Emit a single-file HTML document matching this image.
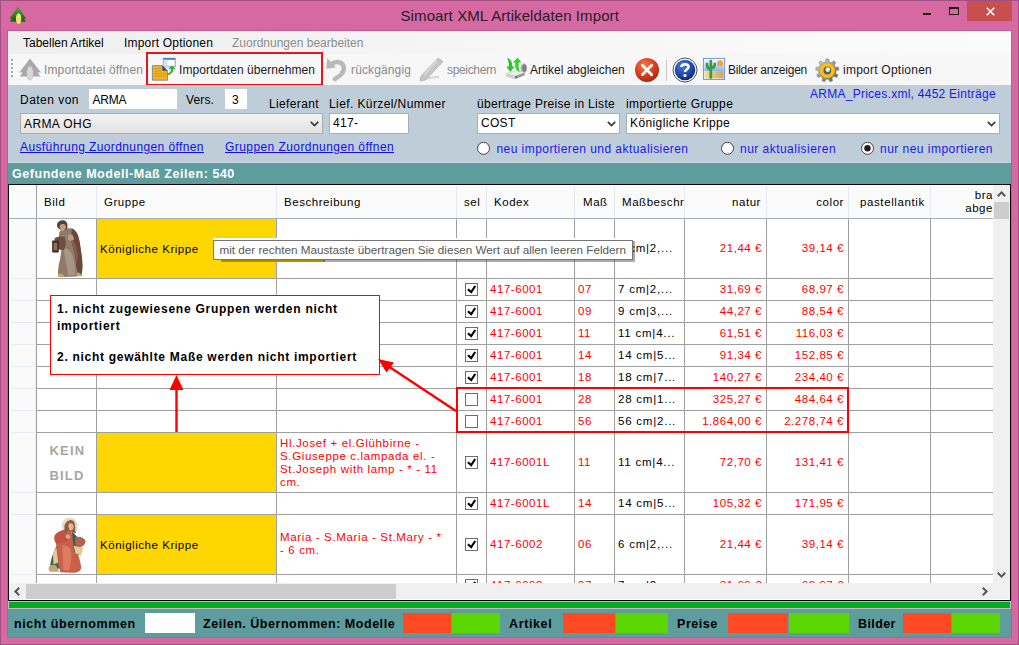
<!DOCTYPE html>
<html><head><meta charset="utf-8">
<style>
*{box-sizing:border-box}
html,body{margin:0;padding:0}
body{width:1019px;height:645px;position:relative;overflow:hidden;background:#D669A1;font-family:"Liberation Sans",sans-serif}
.a{position:absolute}
.t{position:absolute;white-space:nowrap;line-height:1}
svg{position:absolute}
</style></head><body>
<div class="a" style="left:0px;top:0px;width:1019px;height:645px;border:1px solid #A35080;"></div>
<svg style="left:6px;top:2px" width="24" height="24" viewBox="0 0 24 24">
<defs><linearGradient id="tg" x1="0" y1="0" x2="0" y2="1"><stop offset="0" stop-color="#3cb82a"/><stop offset="1" stop-color="#0b5a0c"/></linearGradient></defs>
<path d="M11.9 5.6 L19.9 16.4 L17.6 16.4 L19.7 19.6 L4.1 19.6 L6.2 16.4 L3.9 16.4 Z" fill="url(#tg)" stroke="#6a5a20" stroke-width="0.5"/>
<ellipse cx="12.6" cy="16.8" rx="2.7" ry="5.3" fill="#ece070"/>
<ellipse cx="12.6" cy="13.5" rx="1.8" ry="2" fill="#f6ee90"/>
</svg>
<div class="t" style="left:400.5px;top:7.80px;font-size:15px;color:#2b1b28;letter-spacing:0.1px;">Simoart XML Artikeldaten Import</div>
<div class="a" style="left:923px;top:13px;width:8px;height:2px;background:#1a1a1a;"></div>
<div class="a" style="left:949px;top:7px;width:10px;height:8px;border:1px solid #1a1a1a;border-top-width:2px;"></div>
<div class="a" style="left:967px;top:1px;width:45px;height:20px;background:#C7504F;"></div>
<svg style="left:985.5px;top:7px" width="9" height="9" viewBox="0 0 9 9"><path d="M0.8 0.8 L8.2 8.2 M8.2 0.8 L0.8 8.2" stroke="#fff" stroke-width="1.6"/></svg>
<div class="a" style="left:7px;top:30px;width:1005px;height:608px;border:1px solid #C55A92;"></div>
<div class="a" style="left:8px;top:31px;width:1003px;height:23px;background:linear-gradient(90deg,#EEEEEE,#F6F6F6 50%,#FBFBFB);"></div>
<div class="t" style="left:23px;top:36.84px;font-size:12px;color:#000;">Tabellen Artikel</div>
<div class="t" style="left:124px;top:36.84px;font-size:12px;color:#000;letter-spacing:0.2px;">Import Optionen</div>
<div class="t" style="left:232px;top:36.84px;font-size:12px;color:#8d8d8d;">Zuordnungen bearbeiten</div>
<div class="a" style="left:8px;top:54px;width:1003px;height:31px;background:#F7F7F7;"></div>
<div class="a" style="left:11px;top:59px;width:2px;height:2px;background:#A8A8A8;"></div>
<div class="a" style="left:11px;top:63px;width:2px;height:2px;background:#A8A8A8;"></div>
<div class="a" style="left:11px;top:67px;width:2px;height:2px;background:#A8A8A8;"></div>
<div class="a" style="left:11px;top:71px;width:2px;height:2px;background:#A8A8A8;"></div>
<div class="a" style="left:11px;top:75px;width:2px;height:2px;background:#A8A8A8;"></div>
<svg style="left:19px;top:58px" width="23" height="23" viewBox="0 0 23 23">
<path d="M11 0.5 L22 14.5 L18.5 14.5 L21.5 18.5 L0.8 18.5 L3.8 14.5 L0.3 14.5 Z" fill="#A9A9A9"/>
<ellipse cx="11" cy="15" rx="3.3" ry="7" fill="#D9D9D9" stroke="#B5B5B5" stroke-width="0.6"/>
</svg>
<div class="t" style="left:44px;top:63.84px;font-size:12px;color:#8a8a8a;letter-spacing:0.14px;">Importdatei öffnen</div>
<div class="a" style="left:146px;top:52px;width:177px;height:34px;border:2px solid #E8151B;"></div>
<svg style="left:148px;top:54px" width="32" height="30" viewBox="0 0 32 30">
<rect x="15.2" y="4.2" width="12" height="8.6" fill="#fff" stroke="#7c8fb0" stroke-width="0.8"/>
<rect x="15.2" y="4.2" width="12" height="1.6" fill="#4a72c4"/>
<rect x="15.6" y="5.8" width="3.8" height="6.6" fill="#cfe2f8"/>
<path d="M4.4 11.6 L14.4 11.6 L19.5 16.8 L19.5 26.2 L4.4 26.2 Z" fill="#F4B21E" stroke="#7a7a90" stroke-width="0.8"/>
<path d="M14.4 11.6 L14.4 16.8 L19.5 16.8 Z" fill="#3a4a7a"/>
<path d="M6.5 14.5 H13 M6.5 17 H13 M6.5 19.5 H18 M6.5 22 H18" stroke="#C89A3A" stroke-width="1.1"/>
<path d="M19.8 19.8 C22.5 19 23.6 17 23.4 14.8 L21 14.8 L24 11.8 L27.2 14.8 L25 14.8 C25.2 18 23 20.5 19.8 20.8 Z" fill="#2ec02a" stroke="#1a8a1a" stroke-width="0.5"/>
</svg>
<div class="t" style="left:179px;top:63.84px;font-size:12px;color:#1a1a1a;letter-spacing:0.06px;">Importdaten übernehmen</div>
<svg style="left:322px;top:54px" width="28" height="30" viewBox="0 0 28 30">
<path d="M5.3 4 L4.2 14.7 L14 13.5 Z" fill="#B9B9B9"/>
<path d="M9 10.5 C13.5 6.5 21.5 7 21.8 14.2 C22 19 17.5 22.5 12.8 25" stroke="#B9B9B9" stroke-width="4.6" fill="none" stroke-linecap="round"/>
</svg>
<div class="t" style="left:351px;top:63.84px;font-size:12px;color:#8a8a8a;letter-spacing:0.13px;">rückgängig</div>
<svg style="left:416px;top:54px" width="30" height="30" viewBox="0 0 30 30">
<path d="M5 25 L22.3 23" stroke="#DADADA" stroke-width="2.4" stroke-linecap="round"/>
<path d="M22.3 4 L27 7.6 L9.5 26 L4 27 L5 22 Z" fill="#C6C6C6" stroke="#B0B0B0" stroke-width="0.7"/>
<path d="M21 7 L8 21" stroke="#DCDCDC" stroke-width="1.2"/>
</svg>
<div class="t" style="left:447px;top:63.84px;font-size:12px;color:#8a8a8a;letter-spacing:-0.34px;">speichern</div>
<svg style="left:502px;top:54px" width="30" height="30" viewBox="0 0 30 30">
<rect x="3" y="4" width="22" height="22" fill="#FDFDFD"/>
<ellipse cx="21.8" cy="14.2" rx="3.4" ry="5" fill="#B4B4B4"/>
<ellipse cx="22.3" cy="14.2" rx="2" ry="3.6" fill="#7E7E7E"/>
<path d="M4 19.5 L16 16.2 L22.5 18.8 L22.5 21.2 L13 25 L4 22.2 Z" fill="#A8A8A8"/>
<path d="M4 19.5 L16 16.2 L22.5 18.8 L13 22.2 Z" fill="#EDEDED" stroke="#C8C8C8" stroke-width="0.4"/>
<path d="M4 19.5 L13 22.2 L13 25 L4 22.2 Z" fill="#D0D0D0"/>
<path d="M13 22.2 L22.5 18.8 L22.5 21.2 L13 25 Z" fill="#9A9A9A"/>
<rect x="13.6" y="22" width="1" height="2.2" fill="#2a6a2a"/>
<path d="M4.8 4 C8.2 4.6 10.6 7.5 10.3 12.6 L12.6 12.6 L8.3 18 L4.2 12.4 L6.8 12.5 C7 9.5 6.5 6.5 4.8 4 Z" fill="#2FC42A"/>
<path d="M17.8 18 C14 17 12.6 13 13.2 8.6 L10.6 8.6 L15.6 3.6 L19.6 8.4 L16.9 8.5 C16.4 11.8 16.8 15.2 17.8 18 Z" fill="#3CD034"/>
</svg>
<div class="t" style="left:530px;top:63.84px;font-size:12px;color:#1a1a1a;">Artikel abgleichen</div>
<svg style="left:634px;top:57px" width="26" height="26" viewBox="0 0 26 26">
<defs><radialGradient id="rg1" cx="40%" cy="30%" r="70%"><stop offset="0" stop-color="#f07a4a"/><stop offset="0.6" stop-color="#d9401c"/><stop offset="1" stop-color="#a82a10"/></radialGradient></defs>
<circle cx="13" cy="13" r="12" fill="url(#rg1)"/>
<path d="M8.3 8.3 L17.7 17.7 M17.7 8.3 L8.3 17.7" stroke="#fff" stroke-width="2.7" stroke-linecap="round"/>
</svg>
<div class="a" style="left:666px;top:60px;width:1px;height:21px;background:#c8c8c8;"></div>
<svg style="left:672px;top:57px" width="26" height="26" viewBox="0 0 26 26">
<defs><radialGradient id="rg2" cx="40%" cy="30%" r="70%"><stop offset="0" stop-color="#4a7ee0"/><stop offset="0.7" stop-color="#1c44a8"/><stop offset="1" stop-color="#102a78"/></radialGradient></defs>
<circle cx="13" cy="13" r="12" fill="#fff" stroke="#555" stroke-width="1"/>
<circle cx="13" cy="13" r="10.3" fill="url(#rg2)"/>
<path d="M9.5 10 C9.5 6.5 16.5 6.5 16.5 10 C16.5 12.5 13 12.5 13 15" stroke="#fff" stroke-width="2.6" fill="none"/>
<circle cx="13" cy="18.5" r="1.6" fill="#fff"/>
</svg>
<svg style="left:700px;top:54px" width="30" height="30" viewBox="0 0 30 30">
<defs><linearGradient id="sky" x1="0" y1="0" x2="0" y2="1"><stop offset="0" stop-color="#F4F8FE"/><stop offset="1" stop-color="#86B4EE"/></linearGradient>
<linearGradient id="sand" x1="0" y1="0" x2="1" y2="0"><stop offset="0" stop-color="#F2E2A0"/><stop offset="1" stop-color="#C8A660"/></linearGradient></defs>
<rect x="3.4" y="4.4" width="21.2" height="21" fill="#fff" stroke="#6A8AD8" stroke-width="0.9"/>
<rect x="4.3" y="5.3" width="19.4" height="11.8" fill="url(#sky)"/>
<rect x="4.3" y="17.1" width="19.4" height="7.4" fill="url(#sand)"/>
<circle cx="20.2" cy="9.2" r="3" fill="#F5A623"/>
<path d="M10.8 23.6 L10.8 7 M10.8 15 C7.5 15 7 13 7 10 M10.8 14 C14 14 14.8 12.5 14.8 10" stroke="#3E9A3A" stroke-width="2.7" fill="none" stroke-linecap="round"/>
</svg>
<div class="t" style="left:728px;top:63.84px;font-size:12px;color:#1a1a1a;letter-spacing:-0.25px;">Bilder anzeigen</div>
<svg style="left:812px;top:54px" width="32" height="30" viewBox="0 0 32 30">
<defs><linearGradient id="gg" x1="0" y1="0" x2="1" y2="1"><stop offset="0" stop-color="#DADADA"/><stop offset="1" stop-color="#4E565C"/></linearGradient></defs>
<polygon points="13.55,7.88 13.91,4.98 16.69,4.98 17.05,7.88 19.44,8.74 19.50,8.77 21.64,6.79 23.77,8.57 22.18,11.02 23.46,13.21 23.49,13.28 26.40,13.13 26.88,15.87 24.10,16.72 23.67,19.23 23.64,19.30 25.97,21.06 24.58,23.46 21.89,22.33 19.95,23.97 19.89,24.01 20.54,26.85 17.93,27.80 16.61,25.20 14.06,25.21 13.99,25.20 12.67,27.80 10.06,26.85 10.71,24.01 8.75,22.38 8.71,22.33 6.02,23.46 4.63,21.06 6.96,19.30 6.50,16.80 6.50,16.72 3.72,15.87 4.20,13.13 7.11,13.28 8.37,11.07 8.42,11.02 6.83,8.57 8.96,6.79 11.10,8.77 13.48,7.89" fill="url(#gg)" stroke="#707070" stroke-width="0.5"/>
<circle cx="15.3" cy="16.5" r="7.6" fill="#FFC20E" stroke="#E8A000" stroke-width="0.6"/>
<circle cx="15.3" cy="16.5" r="3.9" fill="#5A5E62"/>
<circle cx="15.8" cy="15.6" r="2.3" fill="#F4F4F4"/>
</svg>
<div class="t" style="left:843px;top:63.84px;font-size:12px;color:#1a1a1a;letter-spacing:0.24px;">import Optionen</div>
<div class="a" style="left:8px;top:85px;width:1003px;height:78px;background:#BFCDD9;"></div>
<div class="a" style="left:8px;top:162px;width:1003px;height:1px;background:#C8D3DF;"></div>
<div class="t" style="left:20px;top:93.84px;font-size:12px;color:#000;letter-spacing:0.48px;">Daten von</div>
<div class="a" style="left:89px;top:89px;width:88px;height:20px;background:#fff;"></div>
<div class="t" style="left:92.5px;top:93.84px;font-size:12px;color:#000;letter-spacing:-0.2px;">ARMA</div>
<div class="t" style="left:186px;top:93.84px;font-size:12px;color:#000;letter-spacing:0.13px;">Vers.</div>
<div class="a" style="left:225px;top:89px;width:22px;height:20px;background:#fff;"></div>
<div class="t" style="left:232px;top:93.84px;font-size:12px;color:#000;">3</div>
<div class="t" style="left:269px;top:98.14px;font-size:12px;color:#000;letter-spacing:0.37px;">Lieferant</div>
<div class="t" style="left:329px;top:98.14px;font-size:12px;color:#000;letter-spacing:0.4px;">Lief. Kürzel/Nummer</div>
<div class="t" style="left:477px;top:97.84px;font-size:12px;color:#000;letter-spacing:0.32px;">übertrage Preise in Liste</div>
<div class="t" style="left:626px;top:97.84px;font-size:12px;color:#000;letter-spacing:0.4px;">importierte Gruppe</div>
<div class="t" style="left:810px;top:88.04px;font-size:12px;color:#1a1ae6;letter-spacing:0.26px;">ARMA_Prices.xml, 4452 Einträge</div>
<div class="a" style="left:20px;top:113px;width:303px;height:21px;background:linear-gradient(#F2F2F2,#E3E3E3);border:1px solid #ADADAD;"></div>
<div class="t" style="left:24px;top:117.84px;font-size:12px;color:#000;letter-spacing:0.4px;">ARMA OHG</div>
<svg style="left:310px;top:121px" width="9" height="6" viewBox="0 0 9 6"><path d="M0.8 0.8 L4.5 4.6 L8.2 0.8" stroke="#3a3a3a" stroke-width="1.7" fill="none"/></svg>
<div class="a" style="left:329px;top:113px;width:80px;height:21px;background:#fff;border:1px solid #ABADB3;"></div>
<div class="t" style="left:333px;top:117.34px;font-size:12px;color:#000;letter-spacing:0.3px;">417-</div>
<div class="a" style="left:477px;top:113px;width:143px;height:21px;background:#fff;border:1px solid #ABADB3;"></div>
<div class="t" style="left:481px;top:117.34px;font-size:12px;color:#000;letter-spacing:0.3px;">COST</div>
<svg style="left:607px;top:121px" width="9" height="6" viewBox="0 0 9 6"><path d="M0.8 0.8 L4.5 4.6 L8.2 0.8" stroke="#3a3a3a" stroke-width="1.7" fill="none"/></svg>
<div class="a" style="left:626px;top:113px;width:374px;height:21px;background:#fff;border:1px solid #ABADB3;"></div>
<div class="t" style="left:630px;top:117.34px;font-size:12px;color:#000;letter-spacing:0.4px;">Königliche Krippe</div>
<svg style="left:987px;top:121px" width="9" height="6" viewBox="0 0 9 6"><path d="M0.8 0.8 L4.5 4.6 L8.2 0.8" stroke="#3a3a3a" stroke-width="1.7" fill="none"/></svg>
<div class="t" style="left:20px;top:140.84px;font-size:12px;color:#1010E6;letter-spacing:0.39px;text-decoration:underline;">Ausführung Zuordnungen öffnen</div>
<div class="t" style="left:225px;top:140.84px;font-size:12px;color:#1010E6;letter-spacing:0.43px;text-decoration:underline;">Gruppen Zuordnungen öffnen</div>
<svg style="left:477px;top:142px" width="14" height="14" viewBox="0 0 14 14"><circle cx="6.5" cy="6.3" r="6" fill="#fff" stroke="#444" stroke-width="1"/></svg>
<div class="t" style="left:496.5px;top:143.04px;font-size:12px;color:#1a1ae6;letter-spacing:0.44px;">neu importieren und aktualisieren</div>
<svg style="left:721px;top:142px" width="14" height="14" viewBox="0 0 14 14"><circle cx="6.5" cy="6.3" r="6" fill="#fff" stroke="#444" stroke-width="1"/></svg>
<div class="t" style="left:740px;top:143.04px;font-size:12px;color:#1a1ae6;letter-spacing:0.47px;">nur aktualisieren</div>
<svg style="left:861px;top:142px" width="14" height="14" viewBox="0 0 14 14"><circle cx="6.5" cy="6.3" r="6" fill="#fff" stroke="#444" stroke-width="1"/><circle cx="6.5" cy="6.3" r="3.2" fill="#1e1e1e"/></svg>
<div class="t" style="left:880px;top:143.04px;font-size:12px;color:#1a1ae6;letter-spacing:0.47px;">nur neu importieren</div>
<div class="a" style="left:8px;top:163px;width:1003px;height:21px;background:#5F9C9E;"></div>
<div class="t" style="left:12px;top:167.82px;font-size:12.5px;color:#fff;font-weight:700;letter-spacing:0.54px;">Gefundene Modell-Maß Zeilen: 540</div>
<div class="a" style="left:8px;top:184px;width:1003px;height:417px;background:#fff;border:1px solid #000;"></div>
<div class="a" style="left:9px;top:185px;width:984px;height:33px;background:#FBFBFB;"></div>
<div class="a" style="left:9px;top:218px;width:984px;height:1px;background:#A7AEB8;"></div>
<div class="a" style="left:36px;top:185px;width:1px;height:33px;background:#A0A0A0;"></div>
<div class="a" style="left:96px;top:185px;width:1px;height:33px;background:#E3EAF4;"></div>
<div class="a" style="left:276px;top:185px;width:1px;height:33px;background:#E3EAF4;"></div>
<div class="a" style="left:456px;top:185px;width:1px;height:33px;background:#E3EAF4;"></div>
<div class="a" style="left:486px;top:185px;width:1px;height:33px;background:#E3EAF4;"></div>
<div class="a" style="left:574px;top:185px;width:1px;height:33px;background:#E3EAF4;"></div>
<div class="a" style="left:614px;top:185px;width:1px;height:33px;background:#E3EAF4;"></div>
<div class="a" style="left:684px;top:185px;width:1px;height:33px;background:#E3EAF4;"></div>
<div class="a" style="left:766px;top:185px;width:1px;height:33px;background:#E3EAF4;"></div>
<div class="a" style="left:848px;top:185px;width:1px;height:33px;background:#E3EAF4;"></div>
<div class="a" style="left:930px;top:185px;width:1px;height:33px;background:#E3EAF4;"></div>
<div class="a" style="left:9px;top:219px;width:27px;height:364px;background:#FAFAFA;"></div>
<div class="a" style="left:35px;top:219px;width:1px;height:364px;background:#E6EEF8;"></div>
<div class="a" style="left:11px;top:278px;width:24px;height:1px;background:#E3ECF8;"></div>
<div class="a" style="left:11px;top:300px;width:24px;height:1px;background:#E3ECF8;"></div>
<div class="a" style="left:11px;top:322px;width:24px;height:1px;background:#E3ECF8;"></div>
<div class="a" style="left:11px;top:344px;width:24px;height:1px;background:#E3ECF8;"></div>
<div class="a" style="left:11px;top:366px;width:24px;height:1px;background:#E3ECF8;"></div>
<div class="a" style="left:11px;top:388px;width:24px;height:1px;background:#E3ECF8;"></div>
<div class="a" style="left:11px;top:410px;width:24px;height:1px;background:#E3ECF8;"></div>
<div class="a" style="left:11px;top:432px;width:24px;height:1px;background:#E3ECF8;"></div>
<div class="a" style="left:11px;top:492px;width:24px;height:1px;background:#E3ECF8;"></div>
<div class="a" style="left:11px;top:514px;width:24px;height:1px;background:#E3ECF8;"></div>
<div class="a" style="left:11px;top:574px;width:24px;height:1px;background:#E3ECF8;"></div>
<div class="a" style="left:36px;top:219px;width:1px;height:364px;background:#A0A0A0;"></div>
<div class="a" style="left:96px;top:219px;width:1px;height:364px;background:#A0A0A0;"></div>
<div class="a" style="left:276px;top:219px;width:1px;height:364px;background:#A0A0A0;"></div>
<div class="a" style="left:456px;top:219px;width:1px;height:364px;background:#A0A0A0;"></div>
<div class="a" style="left:486px;top:219px;width:1px;height:364px;background:#A0A0A0;"></div>
<div class="a" style="left:574px;top:219px;width:1px;height:364px;background:#A0A0A0;"></div>
<div class="a" style="left:614px;top:219px;width:1px;height:364px;background:#A0A0A0;"></div>
<div class="a" style="left:684px;top:219px;width:1px;height:364px;background:#A0A0A0;"></div>
<div class="a" style="left:766px;top:219px;width:1px;height:364px;background:#A0A0A0;"></div>
<div class="a" style="left:848px;top:219px;width:1px;height:364px;background:#A0A0A0;"></div>
<div class="a" style="left:930px;top:219px;width:1px;height:364px;background:#A0A0A0;"></div>
<div class="a" style="left:37px;top:278px;width:956px;height:1px;background:#A0A0A0;"></div>
<div class="a" style="left:37px;top:300px;width:956px;height:1px;background:#A0A0A0;"></div>
<div class="a" style="left:37px;top:322px;width:956px;height:1px;background:#A0A0A0;"></div>
<div class="a" style="left:37px;top:344px;width:956px;height:1px;background:#A0A0A0;"></div>
<div class="a" style="left:37px;top:366px;width:956px;height:1px;background:#A0A0A0;"></div>
<div class="a" style="left:37px;top:388px;width:956px;height:1px;background:#A0A0A0;"></div>
<div class="a" style="left:37px;top:410px;width:956px;height:1px;background:#A0A0A0;"></div>
<div class="a" style="left:37px;top:432px;width:956px;height:1px;background:#A0A0A0;"></div>
<div class="a" style="left:37px;top:492px;width:956px;height:1px;background:#A0A0A0;"></div>
<div class="a" style="left:37px;top:514px;width:956px;height:1px;background:#A0A0A0;"></div>
<div class="a" style="left:37px;top:574px;width:956px;height:1px;background:#A0A0A0;"></div>
<div class="t" style="left:44px;top:196.97px;font-size:11.5px;color:#000;letter-spacing:0.55px;">Bild</div>
<div class="t" style="left:104px;top:196.97px;font-size:11.5px;color:#000;letter-spacing:0.55px;">Gruppe</div>
<div class="t" style="left:284px;top:196.97px;font-size:11.5px;color:#000;letter-spacing:0.55px;">Beschreibung</div>
<div class="t" style="left:464px;top:196.97px;font-size:11.5px;color:#000;letter-spacing:0.55px;">sel</div>
<div class="t" style="left:494px;top:196.97px;font-size:11.5px;color:#000;letter-spacing:0.55px;">Kodex</div>
<div class="t" style="left:583px;top:196.97px;font-size:11.5px;color:#000;letter-spacing:0.55px;">Maß</div>
<div class="a" style="left:622px;top:185px;width:62px;height:33px;overflow:hidden"><div class="t" style="left:0;top:11.97px;font-size:11.5px;letter-spacing:0.55px">Maßbeschreibung</div></div>
<div class="t" style="right:258px;top:196.97px;font-size:11.5px;color:#000;letter-spacing:0.55px;">natur</div>
<div class="t" style="right:175px;top:196.97px;font-size:11.5px;color:#000;letter-spacing:0.55px;">color</div>
<div class="t" style="left:860px;top:196.97px;font-size:11.5px;color:#000;letter-spacing:0.6px;">pastellantik</div>
<div class="t" style="right:26px;top:190.47px;font-size:11.5px;color:#000;letter-spacing:0.55px;">bra</div>
<div class="t" style="right:26px;top:202.87px;font-size:11.5px;color:#000;letter-spacing:0.55px;">abge</div>
<div class="a" style="left:97px;top:219px;width:179px;height:59px;background:#FFD600;"></div>
<div class="a" style="left:97px;top:433px;width:179px;height:59px;background:#FFD600;"></div>
<div class="a" style="left:97px;top:515px;width:179px;height:59px;background:#FFD600;"></div>
<div class="t" style="left:100px;top:243.57px;font-size:11.5px;color:#000;letter-spacing:0.54px;">Königliche Krippe</div>
<div class="t" style="left:100px;top:539.77px;font-size:11.5px;color:#000;letter-spacing:0.54px;">Königliche Krippe</div>
<div class="t" style="left:618px;top:243.27px;font-size:11.5px;color:#000;letter-spacing:0.78px;">6 cm|2,...</div>
<div class="t" style="right:257px;top:243.27px;font-size:11.5px;color:#FF0000;letter-spacing:0.55px;">21,44 €</div>
<div class="t" style="right:175px;top:243.27px;font-size:11.5px;color:#FF0000;letter-spacing:0.55px;">39,14 €</div>
<div class="t" style="left:280px;top:237.27px;font-size:11.5px;color:#FF0000;letter-spacing:0.64px;">Hl.Josef - S.Giuseppe -</div>
<div class="t" style="left:280px;top:251.27px;font-size:11.5px;color:#FF0000;letter-spacing:0.64px;">St.Joseph - * - 6 cm.</div>
<svg style="left:465px;top:283px" width="13" height="13" viewBox="0 0 13 13"><rect x="0.5" y="0.5" width="12" height="12" fill="#fff" stroke="#6E6E6E" stroke-width="1"/><path d="M2.9 6.2 L6.2 9.1 L10.2 3" stroke="#000" stroke-width="2.1" fill="none"/></svg>
<div class="t" style="left:490px;top:284.37px;font-size:11.5px;color:#FF0000;letter-spacing:0.55px;">417-6001</div>
<div class="t" style="left:578px;top:284.37px;font-size:11.5px;color:#FF0000;letter-spacing:0.55px;">07</div>
<div class="t" style="left:618px;top:284.37px;font-size:11.5px;color:#000;letter-spacing:0.78px;">7 cm|2,...</div>
<div class="t" style="right:257px;top:284.37px;font-size:11.5px;color:#FF0000;letter-spacing:0.55px;">31,69 €</div>
<div class="t" style="right:175px;top:284.37px;font-size:11.5px;color:#FF0000;letter-spacing:0.55px;">68,97 €</div>
<svg style="left:465px;top:305px" width="13" height="13" viewBox="0 0 13 13"><rect x="0.5" y="0.5" width="12" height="12" fill="#fff" stroke="#6E6E6E" stroke-width="1"/><path d="M2.9 6.2 L6.2 9.1 L10.2 3" stroke="#000" stroke-width="2.1" fill="none"/></svg>
<div class="t" style="left:490px;top:306.37px;font-size:11.5px;color:#FF0000;letter-spacing:0.55px;">417-6001</div>
<div class="t" style="left:578px;top:306.37px;font-size:11.5px;color:#FF0000;letter-spacing:0.55px;">09</div>
<div class="t" style="left:618px;top:306.37px;font-size:11.5px;color:#000;letter-spacing:0.78px;">9 cm|3,...</div>
<div class="t" style="right:257px;top:306.37px;font-size:11.5px;color:#FF0000;letter-spacing:0.55px;">44,27 €</div>
<div class="t" style="right:175px;top:306.37px;font-size:11.5px;color:#FF0000;letter-spacing:0.55px;">88,54 €</div>
<svg style="left:465px;top:327px" width="13" height="13" viewBox="0 0 13 13"><rect x="0.5" y="0.5" width="12" height="12" fill="#fff" stroke="#6E6E6E" stroke-width="1"/><path d="M2.9 6.2 L6.2 9.1 L10.2 3" stroke="#000" stroke-width="2.1" fill="none"/></svg>
<div class="t" style="left:490px;top:328.37px;font-size:11.5px;color:#FF0000;letter-spacing:0.55px;">417-6001</div>
<div class="t" style="left:578px;top:328.37px;font-size:11.5px;color:#FF0000;letter-spacing:0.55px;">11</div>
<div class="t" style="left:618px;top:328.37px;font-size:11.5px;color:#000;letter-spacing:0.78px;">11 cm|4...</div>
<div class="t" style="right:257px;top:328.37px;font-size:11.5px;color:#FF0000;letter-spacing:0.55px;">61,51 €</div>
<div class="t" style="right:175px;top:328.37px;font-size:11.5px;color:#FF0000;letter-spacing:0.55px;">116,03 €</div>
<svg style="left:465px;top:349px" width="13" height="13" viewBox="0 0 13 13"><rect x="0.5" y="0.5" width="12" height="12" fill="#fff" stroke="#6E6E6E" stroke-width="1"/><path d="M2.9 6.2 L6.2 9.1 L10.2 3" stroke="#000" stroke-width="2.1" fill="none"/></svg>
<div class="t" style="left:490px;top:350.37px;font-size:11.5px;color:#FF0000;letter-spacing:0.55px;">417-6001</div>
<div class="t" style="left:578px;top:350.37px;font-size:11.5px;color:#FF0000;letter-spacing:0.55px;">14</div>
<div class="t" style="left:618px;top:350.37px;font-size:11.5px;color:#000;letter-spacing:0.78px;">14 cm|5...</div>
<div class="t" style="right:257px;top:350.37px;font-size:11.5px;color:#FF0000;letter-spacing:0.55px;">91,34 €</div>
<div class="t" style="right:175px;top:350.37px;font-size:11.5px;color:#FF0000;letter-spacing:0.55px;">152,85 €</div>
<svg style="left:465px;top:371px" width="13" height="13" viewBox="0 0 13 13"><rect x="0.5" y="0.5" width="12" height="12" fill="#fff" stroke="#6E6E6E" stroke-width="1"/><path d="M2.9 6.2 L6.2 9.1 L10.2 3" stroke="#000" stroke-width="2.1" fill="none"/></svg>
<div class="t" style="left:490px;top:372.37px;font-size:11.5px;color:#FF0000;letter-spacing:0.55px;">417-6001</div>
<div class="t" style="left:578px;top:372.37px;font-size:11.5px;color:#FF0000;letter-spacing:0.55px;">18</div>
<div class="t" style="left:618px;top:372.37px;font-size:11.5px;color:#000;letter-spacing:0.78px;">18 cm|7...</div>
<div class="t" style="right:257px;top:372.37px;font-size:11.5px;color:#FF0000;letter-spacing:0.55px;">140,27 €</div>
<div class="t" style="right:175px;top:372.37px;font-size:11.5px;color:#FF0000;letter-spacing:0.55px;">234,40 €</div>
<svg style="left:465px;top:393px" width="13" height="13" viewBox="0 0 13 13"><rect x="0.5" y="0.5" width="12" height="12" fill="#fff" stroke="#6E6E6E" stroke-width="1"/></svg>
<div class="t" style="left:490px;top:394.37px;font-size:11.5px;color:#FF0000;letter-spacing:0.55px;">417-6001</div>
<div class="t" style="left:578px;top:394.37px;font-size:11.5px;color:#FF0000;letter-spacing:0.55px;">28</div>
<div class="t" style="left:618px;top:394.37px;font-size:11.5px;color:#000;letter-spacing:0.78px;">28 cm|1...</div>
<div class="t" style="right:257px;top:394.37px;font-size:11.5px;color:#FF0000;letter-spacing:0.55px;">325,27 €</div>
<div class="t" style="right:175px;top:394.37px;font-size:11.5px;color:#FF0000;letter-spacing:0.55px;">484,64 €</div>
<svg style="left:465px;top:415px" width="13" height="13" viewBox="0 0 13 13"><rect x="0.5" y="0.5" width="12" height="12" fill="#fff" stroke="#6E6E6E" stroke-width="1"/></svg>
<div class="t" style="left:490px;top:416.37px;font-size:11.5px;color:#FF0000;letter-spacing:0.55px;">417-6001</div>
<div class="t" style="left:578px;top:416.37px;font-size:11.5px;color:#FF0000;letter-spacing:0.55px;">56</div>
<div class="t" style="left:618px;top:416.37px;font-size:11.5px;color:#000;letter-spacing:0.78px;">56 cm|2...</div>
<div class="t" style="right:257px;top:416.37px;font-size:11.5px;color:#FF0000;letter-spacing:0.55px;">1.864,00 €</div>
<div class="t" style="right:175px;top:416.37px;font-size:11.5px;color:#FF0000;letter-spacing:0.55px;">2.278,74 €</div>
<svg style="left:465px;top:456px" width="13" height="13" viewBox="0 0 13 13"><rect x="0.5" y="0.5" width="12" height="12" fill="#fff" stroke="#6E6E6E" stroke-width="1"/><path d="M2.9 6.2 L6.2 9.1 L10.2 3" stroke="#000" stroke-width="2.1" fill="none"/></svg>
<div class="t" style="left:490px;top:457.37px;font-size:11.5px;color:#FF0000;letter-spacing:0.55px;">417-6001L</div>
<div class="t" style="left:578px;top:457.37px;font-size:11.5px;color:#FF0000;letter-spacing:0.55px;">11</div>
<div class="t" style="left:618px;top:457.37px;font-size:11.5px;color:#000;letter-spacing:0.78px;">11 cm|4...</div>
<div class="t" style="right:257px;top:457.37px;font-size:11.5px;color:#FF0000;letter-spacing:0.55px;">72,70 €</div>
<div class="t" style="right:175px;top:457.37px;font-size:11.5px;color:#FF0000;letter-spacing:0.55px;">131,41 €</div>
<div class="t" style="left:280px;top:437.57px;font-size:11.5px;color:#FF0000;letter-spacing:0.64px;">Hl.Josef + el.Glühbirne -</div>
<div class="t" style="left:280px;top:450.57px;font-size:11.5px;color:#FF0000;letter-spacing:0.64px;">S.Giuseppe c.lampada el. -</div>
<div class="t" style="left:280px;top:463.57px;font-size:11.5px;color:#FF0000;letter-spacing:0.64px;">St.Joseph with lamp - * - 11</div>
<div class="t" style="left:280px;top:476.57px;font-size:11.5px;color:#FF0000;letter-spacing:0.64px;">cm.</div>
<div class="t" style="left:49.5px;top:443.80px;font-size:13px;color:#A6A6A6;font-weight:700;letter-spacing:1.2px;">KEIN</div>
<div class="t" style="left:49.5px;top:469.00px;font-size:13px;color:#A6A6A6;font-weight:700;letter-spacing:1.15px;">BILD</div>
<svg style="left:465px;top:497px" width="13" height="13" viewBox="0 0 13 13"><rect x="0.5" y="0.5" width="12" height="12" fill="#fff" stroke="#6E6E6E" stroke-width="1"/><path d="M2.9 6.2 L6.2 9.1 L10.2 3" stroke="#000" stroke-width="2.1" fill="none"/></svg>
<div class="t" style="left:490px;top:498.37px;font-size:11.5px;color:#FF0000;letter-spacing:0.55px;">417-6001L</div>
<div class="t" style="left:578px;top:498.37px;font-size:11.5px;color:#FF0000;letter-spacing:0.55px;">14</div>
<div class="t" style="left:618px;top:498.37px;font-size:11.5px;color:#000;letter-spacing:0.78px;">14 cm|5...</div>
<div class="t" style="right:257px;top:498.37px;font-size:11.5px;color:#FF0000;letter-spacing:0.55px;">105,32 €</div>
<div class="t" style="right:175px;top:498.37px;font-size:11.5px;color:#FF0000;letter-spacing:0.55px;">171,95 €</div>
<svg style="left:465px;top:538px" width="13" height="13" viewBox="0 0 13 13"><rect x="0.5" y="0.5" width="12" height="12" fill="#fff" stroke="#6E6E6E" stroke-width="1"/><path d="M2.9 6.2 L6.2 9.1 L10.2 3" stroke="#000" stroke-width="2.1" fill="none"/></svg>
<div class="t" style="left:490px;top:539.37px;font-size:11.5px;color:#FF0000;letter-spacing:0.55px;">417-6002</div>
<div class="t" style="left:578px;top:539.37px;font-size:11.5px;color:#FF0000;letter-spacing:0.55px;">06</div>
<div class="t" style="left:618px;top:539.37px;font-size:11.5px;color:#000;letter-spacing:0.78px;">6 cm|2,...</div>
<div class="t" style="right:257px;top:539.37px;font-size:11.5px;color:#FF0000;letter-spacing:0.55px;">21,44 €</div>
<div class="t" style="right:175px;top:539.37px;font-size:11.5px;color:#FF0000;letter-spacing:0.55px;">39,14 €</div>
<div class="t" style="left:280px;top:532.27px;font-size:11.5px;color:#FF0000;letter-spacing:0.64px;">Maria - S.Maria - St.Mary - *</div>
<div class="t" style="left:280px;top:545.27px;font-size:11.5px;color:#FF0000;letter-spacing:0.64px;">- 6 cm.</div>
<div class="a" style="left:37px;top:575px;width:956px;height:8px;overflow:hidden">
<div class="a" style="left:-37px;top:-575px;width:1019px;height:645px">
<svg style="left:465px;top:579px" width="13" height="13" viewBox="0 0 13 13"><rect x="0.5" y="0.5" width="12" height="12" fill="#fff" stroke="#6E6E6E" stroke-width="1"/><path d="M2.9 6.2 L6.2 9.1 L10.2 3" stroke="#000" stroke-width="2.1" fill="none"/></svg>
<div class="t" style="left:490px;top:579.77px;font-size:11.5px;color:#FF0000;letter-spacing:0.55px;">417-6002</div>
<div class="t" style="left:578px;top:579.77px;font-size:11.5px;color:#FF0000;letter-spacing:0.55px;">07</div>
<div class="t" style="left:618px;top:579.77px;font-size:11.5px;color:#000;letter-spacing:0.78px;">7 cm|2,...</div>
<div class="t" style="right:257px;top:579.77px;font-size:11.5px;color:#FF0000;letter-spacing:0.55px;">31,69 €</div>
<div class="t" style="right:175px;top:579.77px;font-size:11.5px;color:#FF0000;letter-spacing:0.55px;">68,97 €</div>
</div></div>
<div class="a" style="left:993px;top:185px;width:17px;height:398px;background:#F0F0F0;"></div>
<div class="a" style="left:994px;top:202px;width:15px;height:17px;background:#CDCDCD;"></div>
<svg style="left:997px;top:191px" width="9" height="6" viewBox="0 0 9 6"><path d="M0.8 5.2 L4.5 1.4 L8.2 5.2" stroke="#555" stroke-width="2" fill="none"/></svg>
<svg style="left:997px;top:572px" width="9" height="6" viewBox="0 0 9 6"><path d="M0.8 0.8 L4.5 4.6 L8.2 0.8" stroke="#555" stroke-width="2" fill="none"/></svg>
<div class="a" style="left:9px;top:583px;width:1001px;height:16px;background:#F0F0F0;"></div>
<div class="a" style="left:26px;top:584px;width:370px;height:15px;background:#CDCDCD;"></div>
<svg style="left:14px;top:587px" width="6" height="9" viewBox="0 0 6 9"><path d="M5.2 0.8 L1.4 4.5 L5.2 8.2" stroke="#555" stroke-width="2" fill="none"/></svg>
<svg style="left:982px;top:587px" width="6" height="9" viewBox="0 0 6 9"><path d="M0.8 0.8 L4.6 4.5 L0.8 8.2" stroke="#555" stroke-width="2" fill="none"/></svg>
<svg style="left:44px;top:218px" width="46" height="62" viewBox="0 0 479 645">
<path d="M160 140 C200 110 260 100 295 110 C330 130 355 170 365 230 C375 300 390 380 395 460 C400 520 385 560 395 600 L330 608 L200 615 L150 612 C140 560 150 500 165 440 C175 380 185 320 180 280 C165 240 150 190 160 140 Z" fill="#8F7B69"/>
<path d="M290 108 C340 130 362 180 372 250 C385 330 400 420 402 500 C400 560 392 590 380 600 C350 580 335 520 330 450 C320 370 300 290 280 220 Z" fill="#67483A"/>
<path d="M300 230 C330 260 350 330 355 420 L340 470 C325 400 310 320 285 250 Z" fill="#8A5A48"/>
<path d="M205 320 C240 310 280 330 300 400 C320 470 330 540 320 590 L250 600 C240 520 220 430 205 320 Z" fill="#A99583"/>
<path d="M110 210 C140 190 190 185 215 200 C230 240 230 290 210 330 C180 340 140 330 120 300 Z" fill="#6C4D40"/>
<rect x="85" y="235" width="68" height="125" rx="6" fill="#3A2C26"/>
<rect x="100" y="258" width="38" height="78" fill="#A36C48"/>
<path d="M250 175 C280 160 310 170 312 220 C295 240 265 240 250 225 Z" fill="#BA9C82"/>
<path d="M135 70 C140 30 180 15 215 25 C245 40 250 80 240 115 C225 130 200 130 180 125 C150 115 133 95 135 70 Z" fill="#5A4032"/>
<path d="M165 80 C175 55 215 55 228 80 C232 110 215 135 192 135 C172 130 160 105 165 80 Z" fill="#C29C7E"/>
<path d="M148 585 C170 570 200 575 212 612 L145 615 Z M338 575 C360 565 385 570 392 602 L340 606 Z" fill="#C9A172"/>
</svg>
<svg style="left:40px;top:514px" width="54" height="62" viewBox="0 0 562 645">
<path d="M105 545 C110 470 140 390 175 330 L230 350 L250 560 L160 575 Z" fill="#3d6866"/>
<path d="M135 400 C150 370 180 345 210 350 L225 470 C200 500 165 520 140 520 Z" fill="#E3CC92"/>
<path d="M175 215 C200 170 250 150 300 160 C330 175 345 230 360 300 C380 380 420 470 430 560 C420 600 390 615 330 612 L210 605 C190 520 175 430 170 330 C160 280 165 240 175 215 Z" fill="#C9604A"/>
<path d="M150 230 C170 180 240 160 280 200 C300 240 290 280 260 300 L170 310 C150 290 145 260 150 230 Z" fill="#C25442"/>
<path d="M330 185 C370 210 410 260 425 320 L425 430 C390 430 365 410 355 380 C345 320 340 250 330 185 Z" fill="#365E5C"/>
<path d="M350 330 L445 345 C450 380 440 410 420 430 L370 410 Z" fill="#E3CC92"/>
<path d="M370 240 C410 230 455 240 475 280 C470 320 440 345 400 340 L365 320 Z" fill="#B56050"/>
<path d="M230 330 C270 320 300 330 320 380 C335 450 320 540 300 590 L245 580 C240 500 235 420 230 330 Z" fill="#DE7B62"/>
<path d="M225 130 C220 70 270 35 320 38 C370 40 395 80 392 150 C380 170 360 175 340 170 L260 175 C240 165 228 150 225 130 Z" fill="#E8D9C4"/>
<path d="M255 150 C250 100 280 65 325 62 C360 70 370 110 365 160 L375 200 C340 195 320 180 300 175 L250 190 Z" fill="#8C5A3A"/>
<path d="M300 100 C320 90 350 100 352 130 C350 160 330 175 310 170 C295 150 292 120 300 100 Z" fill="#E6B694"/>
<path d="M90 560 C100 535 140 520 165 535 L200 600 L105 600 C92 590 88 575 90 560 Z" fill="#C9A26C"/>
<path d="M270 215 C300 205 320 225 315 250 C300 262 275 258 265 240 Z" fill="#E3A888"/>
</svg>
<div class="a" style="left:456px;top:387px;width:393px;height:46px;border:2px solid #FF0000;"></div>
<div class="a" style="left:221px;top:241px;width:414px;height:21px;background:rgba(0,0,0,0.33);"></div>
<div class="a" style="left:276px;top:260px;width:47px;height:2px;background:#A89000;"></div>
<div class="a" style="left:213px;top:238px;width:420px;height:3px;background:#FFFFFF;"></div>
<div class="a" style="left:213px;top:240px;width:420px;height:20px;background:#FFFFFF;border:1px solid #767676;"></div>
<div class="t" style="left:219.5px;top:244.10px;font-size:11.7px;color:#575757;">mit der rechten Maustaste übertragen Sie diesen Wert auf allen leeren Feldern</div>
<div class="a" style="left:50px;top:295px;width:330px;height:80px;background:#FFFFFF;border:1px solid #FF0000;"></div>
<div class="t" style="left:57px;top:303.34px;font-size:12px;color:#000;font-weight:700;letter-spacing:0.75px;">1. nicht zugewiesene Gruppen werden nicht</div>
<div class="t" style="left:57px;top:319.54px;font-size:12px;color:#000;font-weight:700;letter-spacing:0.75px;">importiert</div>
<div class="t" style="left:57px;top:351.24px;font-size:12px;color:#000;font-weight:700;letter-spacing:0.71px;">2. nicht gewählte Maße werden nicht importiert</div>
<svg style="left:0px;top:0px" width="1019" height="645" viewBox="0 0 1019 645">
<path d="M176.5 432 L176.5 386" stroke="#FF0000" stroke-width="2.4"/>
<path d="M176.5 375 L169.5 390 L183.5 390 Z" fill="#FF0000"/>
<path d="M456 411 L388 366" stroke="#FF0000" stroke-width="2.4"/>
<path d="M378 359 L394 362.5 L386.5 372.5 Z" fill="#FF0000"/>
</svg>
<div class="a" style="left:8px;top:601px;width:1003px;height:36px;background:#5F9C9E;"></div>
<div class="a" style="left:8px;top:601px;width:1003px;height:8px;background:#C0C0C0;"></div>
<div class="a" style="left:9px;top:602px;width:1001px;height:6px;background:#05A925;"></div>
<div class="t" style="left:14px;top:617.92px;font-size:12.5px;color:#000;font-weight:700;letter-spacing:0.57px;">nicht übernommen</div>
<div class="a" style="left:145px;top:613px;width:50px;height:20px;background:#fff;"></div>
<div class="t" style="left:203px;top:617.92px;font-size:12.5px;color:#000;font-weight:700;letter-spacing:0.53px;">Zeilen. Übernommen: Modelle</div>
<div class="a" style="left:403px;top:613px;width:48px;height:20px;background:#FF4A23;"></div>
<div class="a" style="left:452px;top:613px;width:48px;height:20px;background:#5CD600;"></div>
<div class="t" style="left:509px;top:617.92px;font-size:12.5px;color:#000;font-weight:700;letter-spacing:0.62px;">Artikel</div>
<div class="a" style="left:563px;top:613px;width:52px;height:20px;background:#FF4A23;"></div>
<div class="a" style="left:616px;top:613px;width:52px;height:20px;background:#5CD600;"></div>
<div class="t" style="left:677px;top:617.92px;font-size:12.5px;color:#000;font-weight:700;letter-spacing:0.55px;">Preise</div>
<div class="a" style="left:728px;top:613px;width:60px;height:20px;background:#FF4A23;"></div>
<div class="a" style="left:789px;top:613px;width:60px;height:20px;background:#5CD600;"></div>
<div class="t" style="left:858px;top:617.92px;font-size:12.5px;color:#000;font-weight:700;letter-spacing:0.4px;">Bilder</div>
<div class="a" style="left:903px;top:613px;width:48px;height:20px;background:#FF4A23;"></div>
<div class="a" style="left:952px;top:613px;width:48px;height:20px;background:#5CD600;"></div>
</body></html>
